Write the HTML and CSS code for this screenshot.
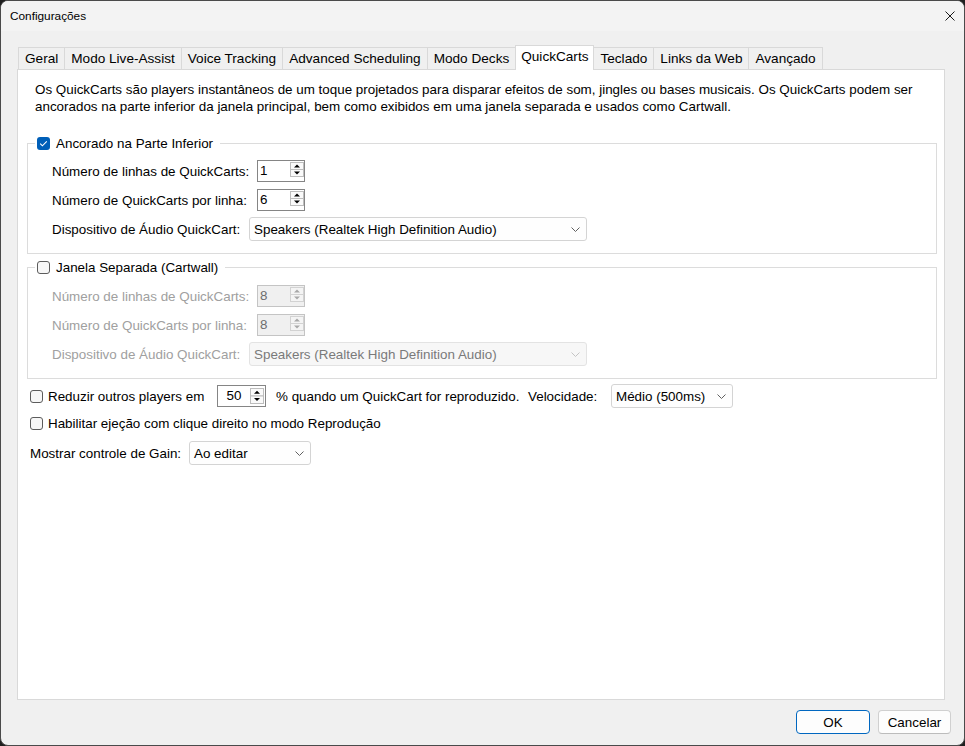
FILE: index.html
```html
<!DOCTYPE html>
<html lang="pt">
<head>
<meta charset="utf-8">
<title>Configurações</title>
<link rel="stylesheet" href="styles.css">
</head>
<body>
<div class="window">
  <div class="titlebar">
    <span class="title">Configurações</span>
    <svg class="close" width="10" height="10" viewBox="0 0 10 10"><path d="M0.5 0.5 L9.5 9.5 M9.5 0.5 L0.5 9.5" stroke="#1a1a1a" stroke-width="1" fill="none"/></svg>
  </div>
  <div class="main">
    <div class="tabs">
      <div class="tab">Geral</div>
      <div class="tab">Modo Live-Assist</div>
      <div class="tab">Voice Tracking</div>
      <div class="tab">Advanced Scheduling</div>
      <div class="tab">Modo Decks</div>
      <div class="tab active">QuickCarts</div>
      <div class="tab">Teclado</div>
      <div class="tab">Links da Web</div>
      <div class="tab">Avançado</div>
    </div>
    <div class="panel">
      <p class="desc">Os QuickCarts são players instantâneos de um toque projetados para disparar efeitos de som, jingles ou bases musicais. Os QuickCarts podem ser<br>ancorados na parte inferior da janela principal, bem como exibidos em uma janela separada e usados como Cartwall.</p>

      <fieldset class="group">
        <legend class="legend">
          <span class="check checked"><svg width="13" height="13" viewBox="0 0 13 13"><path d="M3.2 6.6 L5.4 8.8 L9.8 4.3" stroke="#fff" stroke-width="1.1" fill="none"/></svg></span>
          <span>Ancorado na Parte Inferior</span>
        </legend>
        <div class="frow">
          <span class="lbl">Número de linhas de QuickCarts:</span>
          <div class="spin">
            <span class="val">1</span>
            <svg class="spinbtn" width="14" height="15" viewBox="0 0 14 15"><rect x="0.5" y="0.5" width="13" height="7" fill="#fafafa" stroke="#bdbdbd"/><rect x="0.5" y="7.5" width="13" height="7" fill="#fafafa" stroke="#bdbdbd"/><path d="M4 5.5 L10 5.5 L7 2.5 Z" fill="#000"/><path d="M4 9.5 L10 9.5 L7 12.5 Z" fill="#000"/></svg>
          </div>
        </div>
        <div class="frow gap7">
          <span class="lbl">Número de QuickCarts por linha:</span>
          <div class="spin">
            <span class="val">6</span>
            <svg class="spinbtn" width="14" height="15" viewBox="0 0 14 15"><rect x="0.5" y="0.5" width="13" height="7" fill="#fafafa" stroke="#bdbdbd"/><rect x="0.5" y="7.5" width="13" height="7" fill="#fafafa" stroke="#bdbdbd"/><path d="M4 5.5 L10 5.5 L7 2.5 Z" fill="#000"/><path d="M4 9.5 L10 9.5 L7 12.5 Z" fill="#000"/></svg>
          </div>
        </div>
        <div class="frow combo-row">
          <span class="lbl">Dispositivo de Áudio QuickCart:</span>
          <div class="combo device">
            <span class="cval">Speakers (Realtek High Definition Audio)</span>
            <svg class="chev" width="9" height="5" viewBox="0 0 9 5"><path d="M0.5 0.5 L4.5 4.5 L8.5 0.5" stroke="#606060" stroke-width="1" fill="none"/></svg>
          </div>
        </div>
      </fieldset>

      <fieldset class="group g2">
        <legend class="legend">
          <span class="check"></span>
          <span>Janela Separada (Cartwall)</span>
        </legend>
        <div class="frow disabled">
          <span class="lbl">Número de linhas de QuickCarts:</span>
          <div class="spin">
            <span class="val">8</span>
            <svg class="spinbtn" width="14" height="15" viewBox="0 0 14 15"><rect x="0.5" y="0.5" width="13" height="7" fill="#f4f4f4" stroke="#d2d2d2"/><rect x="0.5" y="7.5" width="13" height="7" fill="#f4f4f4" stroke="#d2d2d2"/><path d="M4 5.5 L10 5.5 L7 2.5 Z" fill="#a8a8a8"/><path d="M4 9.5 L10 9.5 L7 12.5 Z" fill="#a8a8a8"/></svg>
          </div>
        </div>
        <div class="frow gap7 disabled">
          <span class="lbl">Número de QuickCarts por linha:</span>
          <div class="spin">
            <span class="val">8</span>
            <svg class="spinbtn" width="14" height="15" viewBox="0 0 14 15"><rect x="0.5" y="0.5" width="13" height="7" fill="#f4f4f4" stroke="#d2d2d2"/><rect x="0.5" y="7.5" width="13" height="7" fill="#f4f4f4" stroke="#d2d2d2"/><path d="M4 5.5 L10 5.5 L7 2.5 Z" fill="#a8a8a8"/><path d="M4 9.5 L10 9.5 L7 12.5 Z" fill="#a8a8a8"/></svg>
          </div>
        </div>
        <div class="frow combo-row disabled">
          <span class="lbl">Dispositivo de Áudio QuickCart:</span>
          <div class="combo device">
            <span class="cval">Speakers (Realtek High Definition Audio)</span>
            <svg class="chev" width="9" height="5" viewBox="0 0 9 5"><path d="M0.5 0.5 L4.5 4.5 L8.5 0.5" stroke="#c4c4c4" stroke-width="1" fill="none"/></svg>
          </div>
        </div>
      </fieldset>

      <div class="opts">
        <div class="orow first">
          <span class="check"></span>
          <span class="olbl reduce">Reduzir outros players em</span>
          <div class="spin pct">
            <span class="val">50</span>
            <svg class="spinbtn" width="14" height="16" viewBox="0 0 14 16"><rect x="0.5" y="0.5" width="13" height="7.5" fill="#fafafa" stroke="#bdbdbd"/><rect x="0.5" y="8" width="13" height="7.5" fill="#fafafa" stroke="#bdbdbd"/><path d="M4 5.8 L10 5.8 L7 2.8 Z" fill="#000"/><path d="M4 10 L10 10 L7 13 Z" fill="#000"/></svg>
          </div>
          <span class="pcttxt">% quando um QuickCart for reproduzido.</span>
          <span class="vel">Velocidade:</span>
          <div class="combo small">
            <span class="cval">Médio (500ms)</span>
            <svg class="chev" width="9" height="5" viewBox="0 0 9 5"><path d="M0.5 0.5 L4.5 4.5 L8.5 0.5" stroke="#606060" stroke-width="1" fill="none"/></svg>
          </div>
        </div>
        <div class="orow second">
          <span class="check"></span>
          <span class="olbl">Habilitar ejeção com clique direito no modo Reprodução</span>
        </div>
        <div class="orow third">
          <span class="gainlbl">Mostrar controle de Gain:</span>
          <div class="combo small">
            <span class="cval">Ao editar</span>
            <svg class="chev" width="9" height="5" viewBox="0 0 9 5"><path d="M0.5 0.5 L4.5 4.5 L8.5 0.5" stroke="#606060" stroke-width="1" fill="none"/></svg>
          </div>
        </div>
      </div>
    </div>
    <div class="footer">
      <button class="btn primary ok">OK</button>
      <button class="btn cancel">Cancelar</button>
    </div>
  </div>
</div>
</body>
</html>
```
FILE: styles.css
```css
* { box-sizing: border-box; }

body {
  margin: 0;
  background: #1f1f1f;
  font-family: "Liberation Sans", Arial, sans-serif;
  color: #000;
}

.window {
  width: 965px;
  height: 746px;
  border: 1px solid #4a4a4a;
  border-radius: 8px;
  background: #f0f0f0;
  display: flex;
  flex-direction: column;
  overflow: hidden;
}

.titlebar {
  height: 30px;
  flex: none;
  display: flex;
  align-items: center;
  padding: 0 9px 0 9px;
  background: #f3f3f3;
  font-size: 11.8px;
}

.close { margin-left: auto; margin-top: -1px; }

.main {
  flex: 1;
  display: flex;
  flex-direction: column;
  padding: 14px 19px 0 16px;
  min-height: 0;
}

.tabs {
  display: flex;
  align-items: flex-end;
  height: 24px;
  padding-left: 2px;
  flex: none;
}

.tab {
  height: 22px;
  border: 1px solid #d9d9d9;
  border-bottom: none;
  margin-left: -1px;
  padding: 0 6px;
  font-size: 13.6px;
  line-height: 21px;
  background: #f0f0f0;
  white-space: nowrap;
}

.tab.active {
  height: 25px;
  margin-bottom: -1px;
  background: #fff;
  line-height: 21px;
  padding: 0 5px;
  position: relative;
  z-index: 2;
}

.panel {
  flex: 1;
  background: #fff;
  border: 1px solid #d9d9d9;
  padding: 11px 7px 0 9px;
  font-size: 13.4px;
  position: relative;
  z-index: 1;
}

.desc {
  margin: 0 0 0 8px;
  line-height: 17px;
  white-space: nowrap;
}

.group {
  margin: 20px 0 0 0;
  border: 1px solid #dcdcdc;
  padding: 8px 10px 12px 7px;
  min-width: 0;
}

.group.g2 {
  margin-top: 5px;
  padding-top: 9px;
}

.legend {
  display: flex;
  align-items: center;
  gap: 6px;
  height: 17px;
  line-height: 17px;
  padding: 0 7px 0 2px;
}

.check {
  width: 13px;
  height: 13px;
  flex: none;
  border: 1px solid #5c5c5c;
  border-radius: 3px;
  background: #f7f7f7;
  display: inline-block;
}

.check.checked {
  border: none;
  background: #005fb8;
}

.check svg { display: block; }

.frow {
  display: flex;
  align-items: center;
  height: 22px;
  padding-left: 17px;
}

.frow.gap7 { margin-top: 7px; }

.frow.combo-row {
  height: 24px;
  margin-top: 6px;
}

.lbl {
  width: 197px;
  flex: none;
  white-space: nowrap;
}

.spin {
  width: 48px;
  height: 22px;
  margin-left: 8px;
  border: 1px solid #858585;
  background: #fff;
  display: flex;
  align-items: flex-start;
  flex: none;
}

.spin .val {
  flex: 1;
  padding-left: 2px;
  line-height: 20px;
}

.spinbtn {
  display: block;
  margin-top: 1px;
  flex: none;
}

.combo {
  height: 24px;
  border: 1px solid #d4d4d4;
  border-radius: 3px;
  background: #fefefe;
  display: flex;
  align-items: center;
  padding: 0 6px 0 4px;
  flex: none;
}

.combo.device { width: 338px; }
.combo.small { width: 122px; }

.cval {
  flex: 1;
  white-space: nowrap;
}

.chev { display: block; flex: none; }

.disabled .lbl { color: #a0a0a0; }
.disabled .spin { background: #f0f0f0; border-color: #c4c4c4; }
.disabled .spin .val { color: #6d6d6d; }
.disabled .combo { background: #f7f7f7; border-color: #e3e3e3; }
.disabled .cval { color: #7a7a7a; }

.opts { margin-left: 3px; }

.orow {
  display: flex;
  align-items: center;
  height: 24px;
  white-space: nowrap;
}

.orow.first { margin-top: 5px; }
.orow.second { margin-top: 3px; }
.orow.third { margin-top: 6px; }

.olbl { margin-left: 5px; }
.olbl.reduce { width: 169px; flex: none; }

.spin.pct {
  width: 49px;
  margin-left: 0;
  align-items: flex-start;
}

.spin.pct .val {
  text-align: center;
  padding-left: 0;
}

.spin.pct .spinbtn { margin-top: 2px; margin-right: 1px; }

.pcttxt { margin-left: 10px; width: 252px; flex: none; }
.vel { width: 83px; flex: none; }

.gainlbl { width: 159px; flex: none; }

.footer {
  flex: none;
  display: flex;
  justify-content: flex-end;
  gap: 8px;
  padding: 10px 13px 11px 0;
  margin-right: -19px;
}

.btn {
  height: 24px;
  border: 1px solid #d0d0d0;
  border-bottom-color: #bcbcbc;
  border-radius: 4px;
  background: #fdfdfd;
  font-family: "Liberation Sans", Arial, sans-serif;
  font-size: 13.4px;
  color: #000;
  padding: 0;
}

.btn.ok { width: 74px; }
.btn.cancel { width: 73px; }

.btn.primary {
  border: 1px solid #0067c0;
}
```
